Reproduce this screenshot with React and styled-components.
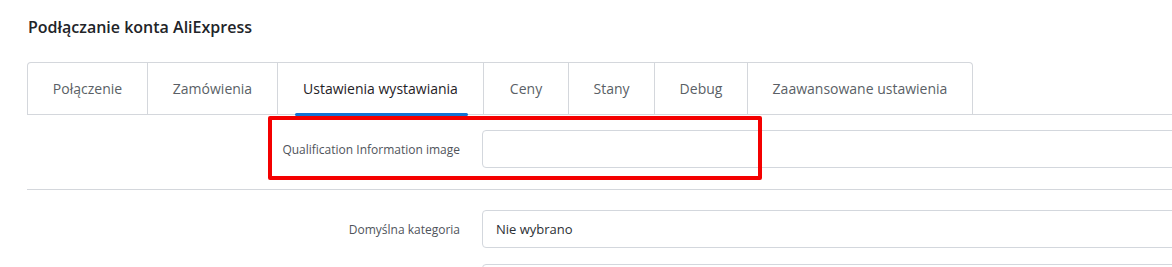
import React from "react";
import styled, { createGlobalStyle } from "styled-components";

const GlobalStyle = createGlobalStyle`
  html, body {
    margin: 0;
    padding: 0;
    background: #ffffff;
    overflow: hidden;
  }
  body {
    font-family: "Open Sans", "Liberation Sans", sans-serif;
  }
`;

const Page = styled.div`
  width: 1400px;
  padding: 17px 0 0 27px;
  box-sizing: border-box;
`;

const Title = styled.h1`
  margin: 0 0 0 1px;
  font-size: 16px;
  line-height: 20px;
  font-weight: 600;
  color: #222428;
`;

const TabBar = styled.div`
  margin-top: 25px;
  display: flex;
  border-bottom: 1px solid #d4d7dc;
`;

const TabList = styled.div`
  display: flex;
  border: 1px solid #d4d7dc;
  border-bottom: none;
  border-radius: 4px 4px 0 0;
`;

const Tab = styled.div`
  position: relative;
  width: ${(p) => p.w}px;
  height: 51px;
  display: flex;
  align-items: center;
  justify-content: center;
  font-size: 14px;
  color: ${(p) => (p.active ? "#1f2226" : "#5a5f66")};
  white-space: nowrap;

  & + & {
    border-left: 1px solid #d4d7dc;
  }
`;

const ActiveBar = styled.span`
  position: absolute;
  left: 17px;
  right: 15px;
  bottom: -2px;
  height: 3px;
  border-radius: 2px;
  background: #1173d4;
`;

const Section = styled.div`
  position: relative;
  padding: ${(p) => p.pad};
  border-bottom: ${(p) => (p.divider ? "1px solid #d4d7dc" : "none")};
  display: flex;
  flex-direction: column;
  gap: 16px;
`;

const Row = styled.div`
  display: grid;
  grid-template-columns: 433px 760px;
  column-gap: 22px;
  align-items: center;
`;

const Label = styled.label`
  text-align: right;
  font-size: 12px;
  color: #4f545b;
`;

const Field = styled.div`
  height: 38px;
  box-sizing: border-box;
  border: 1px solid #d3d7dd;
  border-radius: 4px;
  padding: 0 13px;
  display: flex;
  align-items: center;
  font-size: 13px;
  color: #2c3035;
  background: #fff;
`;

const Highlight = styled.div`
  position: absolute;
  left: 241px;
  top: 1px;
  width: 494px;
  height: 64px;
  box-sizing: border-box;
  border: 4px solid #f40000;
  border-radius: 2px;
  pointer-events: none;
`;

const tabs = [
  { label: "Połączenie", w: 119 },
  { label: "Zamówienia", w: 129 },
  { label: "Ustawienia wystawiania", w: 205, active: true },
  { label: "Ceny", w: 84 },
  { label: "Stany", w: 85 },
  { label: "Debug", w: 92 },
  { label: "Zaawansowane ustawienia", w: 224 },
];

export default function App() {
  return (
    <>
      <GlobalStyle />
      <Page>
        <Title>Podłączanie konta AliExpress</Title>
        <TabBar>
          <TabList>
            {tabs.map((t) => (
              <Tab key={t.label} w={t.w} active={t.active}>
                {t.label}
                {t.active && <ActiveBar />}
              </Tab>
            ))}
          </TabList>
        </TabBar>

        <Section pad="15px 0 21px" divider>
          <Row>
            <Label>Qualification Information image</Label>
            <Field />
          </Row>
          <Highlight />
        </Section>

        <Section pad="20px 0 20px">
          <Row>
            <Label>Domyślna kategoria</Label>
            <Field>Nie wybrano</Field>
          </Row>
          <Row>
            <Label />
            <Field />
          </Row>
        </Section>
      </Page>
    </>
  );
}
